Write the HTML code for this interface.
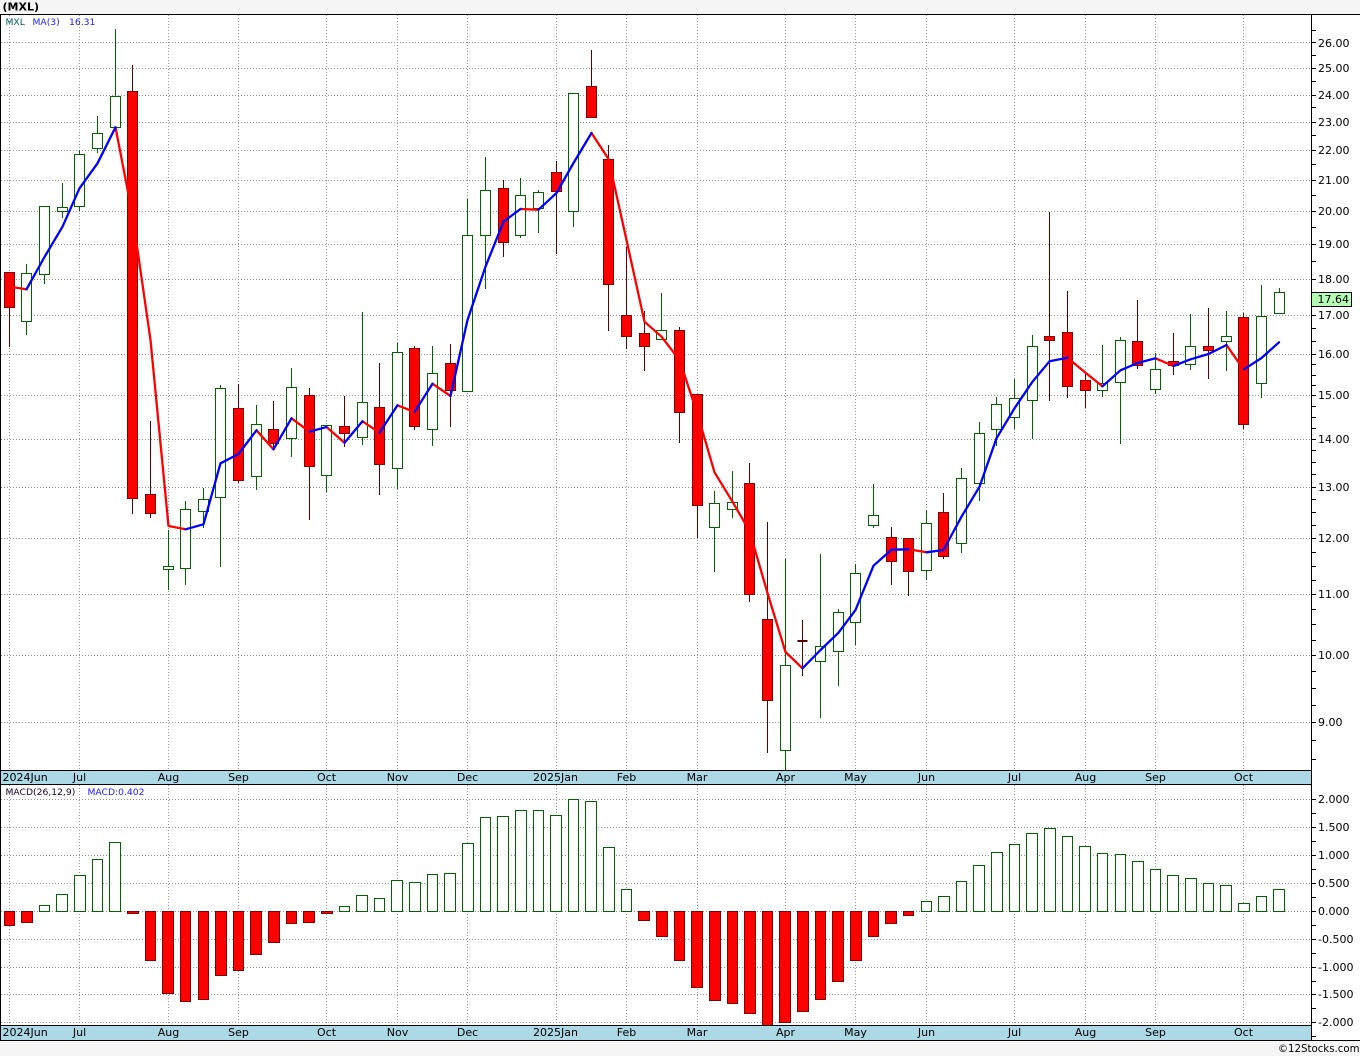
<!DOCTYPE html>
<html lang="en">
<head>
<meta charset="utf-8">
<title>MXL chart</title>
<style>
html,body{margin:0;padding:0;background:#f5f5f5;width:1360px;height:1056px;overflow:hidden}
svg{display:block;position:absolute;left:0;top:0}
text{font-family:"DejaVu Sans","Liberation Sans",sans-serif;font-size:11px;fill:#000}
.m{text-anchor:middle}
.s{font-size:9.2px}
</style>
</head>
<body>
<svg width="1360" height="1056" viewBox="0 0 1360 1056" xmlns="http://www.w3.org/2000/svg">
<rect width="1360" height="1056" fill="#f5f5f5"/>
<rect x="0" y="14" width="1360" height="1026" fill="#fff"/>

<!-- grid -->
<g stroke="#959595" stroke-width="1" stroke-dasharray="1 2" fill="none" shape-rendering="crispEdges">
<path d="M1 42.5H1311M1 68.5H1311M1 95.5H1311M1 122.5H1311M1 150.5H1311M1 180.5H1311M1 211.5H1311M1 244.5H1311M1 279.5H1311M1 315.5H1311M1 354.5H1311M1 395.5H1311M1 439.5H1311M1 487.5H1311M1 538.5H1311M1 594.5H1311M1 655.5H1311M1 722.5H1311"/>
<path d="M1 799.5H1311M1 827.5H1311M1 855.5H1311M1 883.5H1311M1 911.5H1311M1 939.5H1311M1 967.5H1311M1 994.5H1311M1 1022.5H1311"/>
<path d="M9.5 15V770M79.5 15V770M168.5 15V770M238.5 15V770M326.5 15V770M397.5 15V770M467.5 15V770M556.5 15V770M626.5 15V770M697.5 15V770M785.5 15V770M855.5 15V770M926.5 15V770M1014.5 15V770M1085.5 15V770M1155.5 15V770M1243.5 15V770"/>
<path d="M9.5 785V1025M79.5 785V1025M168.5 785V1025M238.5 785V1025M326.5 785V1025M397.5 785V1025M467.5 785V1025M556.5 785V1025M626.5 785V1025M697.5 785V1025M785.5 785V1025M855.5 785V1025M926.5 785V1025M1014.5 785V1025M1085.5 785V1025M1155.5 785V1025M1243.5 785V1025"/>
</g>

<!-- wicks -->
<path shape-rendering="crispEdges" fill="none" stroke="#006400" stroke-width="1" d="M26.5 264V335M44.5 206V284M62.5 183V218M79.5 150V211M97.5 116V153M115.5 29V127M168.5 530V590M185.5 501V585M203.5 488V528M220.5 385V567M256.5 405V490M291.5 368V457M326.5 425V492M362.5 312V445M397.5 343V489M432.5 346V446M467.5 199V391M485.5 157V289M520.5 178V238M538.5 190V233M573.5 93V227M661.5 293V339M714.5 491V572M732.5 471V518M785.5 559V770M820.5 554V718M838.5 609V686M855.5 564V645M873.5 484V528M926.5 510V580M961.5 468V553M979.5 422V501M996.5 397V446M1014.5 379V429M1032.5 335V439M1102.5 345V397M1120.5 337V444M1155.5 353V394M1190.5 314V370M1226.5 311V371M1261.5 285V398M1279.5 288V313"/>
<path shape-rendering="crispEdges" fill="none" stroke="#5a0000" stroke-width="1" d="M9.5 272V347M132.5 65V514M150.5 421V518M238.5 384V483M273.5 401V450M309.5 388V520M344.5 396V447M379.5 363V495M414.5 346V430M450.5 344V427M503.5 180V257M556.5 161V254M591.5 50V118M608.5 145V331M626.5 247V349M644.5 311V371M679.5 327V443M697.5 394V538M749.5 463V602M767.5 522V753M802.5 620V676M891.5 527V585M908.5 538V596M943.5 493V559M1049.5 212V401M1067.5 291V398M1085.5 373V408M1137.5 300V369M1173.5 333V375M1208.5 308V379M1243.5 313V429"/>
<path shape-rendering="crispEdges" fill="none" stroke="#5a0000" stroke-width="2" d="M797.5 641H807.5"/>

<!-- green bodies -->
<path shape-rendering="crispEdges" fill="#fff" stroke="#006400" stroke-width="1" d="M21.5 273.5h10V321.5h-10zM39.5 206.5h10V274.5h-10zM57.5 207.5h10V211.5h-10zM74.5 154.5h10V206.5h-10zM92.5 133.5h10V148.5h-10zM110.5 96.5h10V127.5h-10zM163.5 566.5h10V569.5h-10zM180.5 509.5h10V568.5h-10zM198.5 499.5h10V511.5h-10zM215.5 388.5h10V497.5h-10zM251.5 424.5h10V476.5h-10zM286.5 387.5h10V438.5h-10zM321.5 425.5h10V475.5h-10zM357.5 402.5h10V437.5h-10zM392.5 352.5h10V468.5h-10zM427.5 373.5h10V429.5h-10zM462.5 235.5h10V391.5h-10zM480.5 190.5h10V235.5h-10zM515.5 195.5h10V235.5h-10zM533.5 192.5h10V208.5h-10zM568.5 93.5h10V211.5h-10zM656.5 330.5h10V339.5h-10zM709.5 503.5h10V527.5h-10zM727.5 502.5h10V509.5h-10zM780.5 665.5h10V750.5h-10zM815.5 646.5h10V661.5h-10zM833.5 612.5h10V651.5h-10zM850.5 573.5h10V622.5h-10zM868.5 515.5h10V525.5h-10zM921.5 523.5h10V570.5h-10zM956.5 478.5h10V543.5h-10zM974.5 433.5h10V483.5h-10zM991.5 404.5h10V429.5h-10zM1009.5 398.5h10V417.5h-10zM1027.5 346.5h10V400.5h-10zM1097.5 383.5h10V390.5h-10zM1115.5 340.5h10V382.5h-10zM1150.5 369.5h10V389.5h-10zM1185.5 346.5h10V364.5h-10zM1221.5 336.5h10V341.5h-10zM1256.5 316.5h10V383.5h-10zM1274.5 292.5h10V313.5h-10z"/>
<!-- red bodies -->
<path shape-rendering="crispEdges" fill="#f00" stroke="#800000" stroke-width="1" d="M4.5 272.5h10V307.5h-10zM127.5 91.5h10V498.5h-10zM145.5 494.5h10V513.5h-10zM233.5 408.5h10V480.5h-10zM268.5 429.5h10V443.5h-10zM304.5 395.5h10V466.5h-10zM339.5 426.5h10V433.5h-10zM374.5 407.5h10V464.5h-10zM409.5 348.5h10V426.5h-10zM445.5 363.5h10V390.5h-10zM498.5 188.5h10V242.5h-10zM551.5 172.5h10V191.5h-10zM586.5 86.5h10V117.5h-10zM603.5 159.5h10V284.5h-10zM621.5 315.5h10V336.5h-10zM639.5 333.5h10V346.5h-10zM674.5 330.5h10V412.5h-10zM692.5 394.5h10V505.5h-10zM744.5 483.5h10V594.5h-10zM762.5 619.5h10V700.5h-10zM886.5 537.5h10V561.5h-10zM903.5 538.5h10V571.5h-10zM938.5 512.5h10V556.5h-10zM1044.5 336.5h10V340.5h-10zM1062.5 332.5h10V386.5h-10zM1080.5 380.5h10V390.5h-10zM1132.5 341.5h10V365.5h-10zM1168.5 361.5h10V365.5h-10zM1203.5 346.5h10V350.5h-10zM1238.5 317.5h10V424.5h-10z"/>

<!-- MA line -->
<g fill="none" stroke-width="2.3" stroke-linejoin="round" stroke-linecap="round">
<path stroke="#f00" d="M9.5 286.7L26.5 289.3M115.5 127.3L132.5 215L150.5 340L168.5 526L185.5 529.3M256.5 430.3L273.5 449.3M291.5 418.3L309.5 431.7M326.5 427L344.5 442.7M362.5 421.3L379.5 432.7M397.5 405.3L414.5 412M432.5 383.7L450.5 396M520.5 209L538.5 209.7M591.5 133L608.5 159L626.5 240L644.5 321.7L661.5 336.7L679.5 360L697.5 414L714.5 472.3L732.5 501.7L749.5 531L767.5 593L785.5 652L802.5 668.3M908.5 549.3L926.5 552.3M1067.5 357.7L1085.5 372.7L1102.5 386.3M1155.5 358.3L1173.5 366M1226.5 345L1243.5 369.3"/>
<path stroke="#00f" d="M26.5 289.3L44.5 257L62.5 226.7L79.5 188.3L97.5 163.3L115.5 127.3M185.5 529.3L203.5 524.3L220.5 463.3L238.5 454L256.5 430.3M273.5 449.3L291.5 418.3M309.5 431.7L326.5 427M344.5 442.7L362.5 421.3M379.5 432.7L397.5 405.3M414.5 412L432.5 383.7M450.5 396L467.5 320L485.5 266.7L503.5 221.7L520.5 209M538.5 209.7L556.5 193L573.5 163L591.5 133M802.5 668.3L820.5 650L838.5 632.7L855.5 610L873.5 565.7L891.5 549.7L908.5 549.3M926.5 552.3L943.5 550L961.5 516.7L979.5 486.7L996.5 438.3L1014.5 408.3L1032.5 381.7L1049.5 361.3L1067.5 357.7M1102.5 386.3L1120.5 370.3L1137.5 363L1155.5 358.3M1173.5 366L1190.5 359.3L1208.5 354L1226.5 345M1244 369.3L1261.5 358L1279 342.3"/>
</g>

<!-- MACD bars -->
<path shape-rendering="crispEdges" fill="#fff" stroke="#006400" stroke-width="1" d="M39.5 905.5H49.5V911.5H39.5zM56.5 894.5H67.5V911.5H56.5zM74.5 875.5H85.5V911.5H74.5zM92.5 859.5H102.5V911.5H92.5zM109.5 842.5H120.5V911.5H109.5zM339.5 906.5H349.5V911.5H339.5zM356.5 895.5H367.5V911.5H356.5zM374.5 898.5H384.5V911.5H374.5zM391.5 880.5H402.5V911.5H391.5zM409.5 882.5H420.5V911.5H409.5zM427.5 874.5H437.5V911.5H427.5zM444.5 873.5H455.5V911.5H444.5zM462.5 843.5H473.5V911.5H462.5zM480.5 817.5H490.5V911.5H480.5zM497.5 816.5H508.5V911.5H497.5zM515.5 810.5H526.5V911.5H515.5zM533.5 810.5H543.5V911.5H533.5zM550.5 815.5H561.5V911.5H550.5zM568.5 799.5H578.5V911.5H568.5zM585.5 801.5H596.5V911.5H585.5zM603.5 847.5H614.5V911.5H603.5zM621.5 889.5H631.5V911.5H621.5zM921.5 901.5H931.5V911.5H921.5zM938.5 896.5H949.5V911.5H938.5zM956.5 881.5H966.5V911.5H956.5zM973.5 865.5H984.5V911.5H973.5zM991.5 852.5H1002.5V911.5H991.5zM1009.5 844.5H1019.5V911.5H1009.5zM1026.5 833.5H1037.5V911.5H1026.5zM1044.5 828.5H1055.5V911.5H1044.5zM1062.5 836.5H1072.5V911.5H1062.5zM1079.5 846.5H1090.5V911.5H1079.5zM1097.5 853.5H1107.5V911.5H1097.5zM1115.5 854.5H1125.5V911.5H1115.5zM1132.5 861.5H1143.5V911.5H1132.5zM1150.5 869.5H1160.5V911.5H1150.5zM1167.5 875.5H1178.5V911.5H1167.5zM1185.5 878.5H1196.5V911.5H1185.5zM1203.5 883.5H1213.5V911.5H1203.5zM1220.5 885.5H1231.5V911.5H1220.5zM1238.5 903.5H1249.5V911.5H1238.5zM1256.5 896.5H1266.5V911.5H1256.5zM1273.5 889.5H1284.5V911.5H1273.5z"/>
<path shape-rendering="crispEdges" fill="#f00" stroke="#800000" stroke-width="1" d="M4.5 911.5H14.5V925.5H4.5zM21.5 911.5H32.5V922.5H21.5zM127.5 911.5H138.5V913.5H127.5zM145.5 911.5H155.5V960.5H145.5zM162.5 911.5H173.5V993.5H162.5zM180.5 911.5H190.5V1001.5H180.5zM198.5 911.5H208.5V999.5H198.5zM215.5 911.5H226.5V975.5H215.5zM233.5 911.5H243.5V970.5H233.5zM250.5 911.5H261.5V954.5H250.5zM268.5 911.5H279.5V942.5H268.5zM286.5 911.5H296.5V923.5H286.5zM303.5 911.5H314.5V922.5H303.5zM321.5 911.5H332.5V913.5H321.5zM638.5 911.5H649.5V920.5H638.5zM656.5 911.5H667.5V936.5H656.5zM674.5 911.5H684.5V960.5H674.5zM691.5 911.5H702.5V987.5H691.5zM709.5 911.5H720.5V1000.5H709.5zM727.5 911.5H737.5V1003.5H727.5zM744.5 911.5H755.5V1013.5H744.5zM762.5 911.5H772.5V1025.5H762.5zM779.5 911.5H790.5V1022.5H779.5zM797.5 911.5H808.5V1011.5H797.5zM815.5 911.5H825.5V999.5H815.5zM832.5 911.5H843.5V981.5H832.5zM850.5 911.5H861.5V960.5H850.5zM868.5 911.5H878.5V936.5H868.5zM885.5 911.5H896.5V923.5H885.5zM903.5 911.5H913.5V915.5H903.5z"/>

<!-- bands and frame -->
<rect x="1" y="770" width="1310" height="15" fill="#add8e6"/>
<rect x="1" y="1025" width="1310" height="15" fill="#add8e6"/>
<path shape-rendering="crispEdges" fill="none" stroke="#000" stroke-width="1" d="M0 14.5H1360M0 770.5H1311M0 784.5H1311M0 1025.5H1311M0 1040.5H1360M0.5 14V1040M1311.5 14V1040"/>
<path shape-rendering="crispEdges" fill="none" stroke="#000" stroke-width="1" d="M1312 30.5h4M1312 42.5h4M1312 55.5h4M1312 68.5h4M1312 81.5h4M1312 95.5h4M1312 107.5h4M1312 122.5h4M1312 135.5h4M1312 150.5h4M1312 164.5h4M1312 180.5h4M1312 195.5h4M1312 211.5h4M1312 227.5h4M1312 244.5h4M1312 261.5h4M1312 279.5h4M1312 315.5h4M1312 328.5h4M1312 341.5h4M1312 354.5h4M1312 364.5h4M1312 375.5h4M1312 385.5h4M1312 395.5h4M1312 406.5h4M1312 417.5h4M1312 428.5h4M1312 439.5h4M1312 450.5h4M1312 462.5h4M1312 474.5h4M1312 487.5h4M1312 499.5h4M1312 512.5h4M1312 525.5h4M1312 538.5h4M1312 552.5h4M1312 566.5h4M1312 580.5h4M1312 594.5h4M1312 609.5h4M1312 624.5h4M1312 640.5h4M1312 655.5h4M1312 671.5h4M1312 688.5h4M1312 705.5h4M1312 722.5h4M1312 740.5h4M1312 759.5h4M1312 799.5h4M1312 813.5h4M1312 827.5h4M1312 841.5h4M1312 855.5h4M1312 869.5h4M1312 883.5h4M1312 897.5h4M1312 911.5h4M1312 925.5h4M1312 939.5h4M1312 953.5h4M1312 967.5h4M1312 981.5h4M1312 994.5h4M1312 1008.5h4M1312 1022.5h4M1312 1036.5h4"/>

<!-- price labels -->
<g>
<text x="1318" y="47">26.00</text><text x="1318" y="72">25.00</text><text x="1318" y="99">24.00</text><text x="1318" y="126">23.00</text><text x="1318" y="154">22.00</text><text x="1318" y="184">21.00</text><text x="1318" y="215">20.00</text><text x="1318" y="248">19.00</text><text x="1318" y="283">18.00</text><text x="1318" y="319">17.00</text><text x="1318" y="358">16.00</text><text x="1318" y="399">15.00</text><text x="1318" y="443">14.00</text><text x="1318" y="491">13.00</text><text x="1318" y="542">12.00</text><text x="1318" y="598">11.00</text><text x="1318" y="659">10.00</text><text x="1318" y="726">9.00</text>
<text x="1318" y="803">2.000</text><text x="1318" y="831">1.500</text><text x="1318" y="859">1.000</text><text x="1318" y="887">0.500</text><text x="1318" y="915">0.000</text><text x="1318" y="943">-0.500</text><text x="1318" y="971">-1.000</text><text x="1318" y="998">-1.500</text><text x="1318" y="1026">-2.000</text>
</g>
<rect x="1312" y="292" width="39" height="14" fill="#b4ffb4"/>
<path shape-rendering="crispEdges" fill="none" stroke="#000" d="M1312 292.5H1351.5V306.5H1312"/>
<text x="1317.5" y="303">17.64</text>

<!-- date labels -->
<g>
<text x="2.5" y="781">2024Jun</text><text class="m" x="79.5" y="781">Jul</text><text class="m" x="168.5" y="781">Aug</text><text class="m" x="238.5" y="781">Sep</text><text class="m" x="326.5" y="781">Oct</text><text class="m" x="397.5" y="781">Nov</text><text class="m" x="467.5" y="781">Dec</text><text class="m" x="555.5" y="781">2025Jan</text><text class="m" x="626.5" y="781">Feb</text><text class="m" x="697" y="781">Mar</text><text class="m" x="785.5" y="781">Apr</text><text class="m" x="855.5" y="781">May</text><text class="m" x="926.5" y="781">Jun</text><text class="m" x="1014.5" y="781">Jul</text><text class="m" x="1085.5" y="781">Aug</text><text class="m" x="1155.5" y="781">Sep</text><text class="m" x="1243.5" y="781">Oct</text>
<text x="2.5" y="1036">2024Jun</text><text class="m" x="79.5" y="1036">Jul</text><text class="m" x="168.5" y="1036">Aug</text><text class="m" x="238.5" y="1036">Sep</text><text class="m" x="326.5" y="1036">Oct</text><text class="m" x="397.5" y="1036">Nov</text><text class="m" x="467.5" y="1036">Dec</text><text class="m" x="555.5" y="1036">2025Jan</text><text class="m" x="626.5" y="1036">Feb</text><text class="m" x="697" y="1036">Mar</text><text class="m" x="785.5" y="1036">Apr</text><text class="m" x="855.5" y="1036">May</text><text class="m" x="926.5" y="1036">Jun</text><text class="m" x="1014.5" y="1036">Jul</text><text class="m" x="1085.5" y="1036">Aug</text><text class="m" x="1155.5" y="1036">Sep</text><text class="m" x="1243.5" y="1036">Oct</text>
</g>

<!-- titles -->
<text x="2.5" y="10.5" style="font-weight:bold">(MXL)</text>
<text class="s" x="5.5" y="25" style="fill:#006464">MXL</text>
<text class="s" x="32.5" y="25" style="fill:#2020ff">MA(3)</text>
<text class="s" x="69" y="25" style="fill:#2020ff">16.31</text>
<text class="s" x="5.5" y="795" style="fill:#200030">MACD(26,12,9)</text>
<text class="s" x="87.5" y="795" style="fill:#2020ff">MACD:0.402</text>
<text x="1359.5" y="1052" text-anchor="end" style="font-size:10.2px">©12Stocks.com</text>
</svg>
</body>
</html>
